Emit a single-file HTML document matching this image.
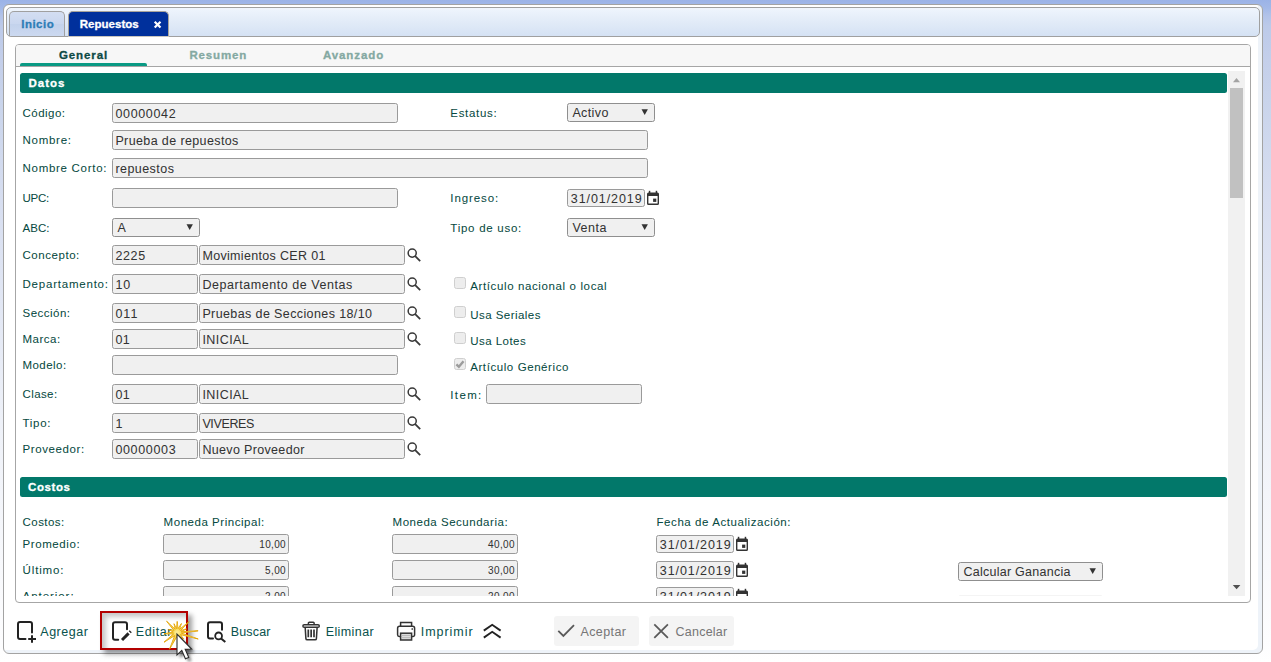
<!DOCTYPE html><html><head><meta charset="utf-8"><title>Repuestos</title><style>

html,body{margin:0;padding:0}
body{width:1271px;height:662px;overflow:hidden;position:relative;font-family:"Liberation Sans",sans-serif;
 background:linear-gradient(180deg,#9bb3e7 0px,#a3b9e8 8px,#b2c3e9 16px,#bccae9 26px,#c4cfea 60px,#c9d4eb 100px,#d7def0 200px,#eef1f8 420px,#fdfdfe 640px,#fff 662px)}
div,span,svg{position:absolute;box-sizing:border-box}
.frame{left:3px;top:4px;width:1260px;height:650px;border:1px solid #a3a3a3;border-radius:6px;background:#fff;box-shadow:inset -4px -3px 0 #eef3f9}
.nav{left:6px;top:7px;width:1254px;height:30px;border:1px solid #a0a0a0;border-radius:5px;background:linear-gradient(180deg,#eff5fd 0,#e3ecf8 45%,#d5e2f4 100%)}
.tab1{left:9px;top:11px;width:56px;height:25px;border:1px solid #a0a0a0;border-bottom:0;border-radius:5px 5px 0 0;background:linear-gradient(180deg,#d3def2 0,#cad7ef 48%,#c3d2ec 52%,#ccd9f0 100%)}
.tab2{left:68px;top:11px;width:101px;height:25px;border:1px solid #a8a49c;border-bottom:0;border-radius:5px 5px 0 0;background:#00309c}
.tab2l{left:68px;top:36px;width:101px;height:1px;background:#c8c5be}
.panel{left:15px;top:44px;width:1236px;height:559px;border:1px solid #a6a6a6;border-radius:4px;background:#fff}
.phead{left:16px;top:45px;width:1234px;height:21px;background:#f7f7f7;border-radius:3px 3px 0 0}
.pline{left:16px;top:66px;width:1234px;height:1px;background:#a6a6a6}
.uline{left:20px;top:63px;width:127px;height:3px;background:#0a9a84;border-radius:2px 2px 0 0}
.bar{left:20px;width:1207px;height:20px;background:#02786a;border-radius:2.5px}
.clip{left:0;top:0;width:1271px;height:596px;overflow:hidden}
.inp{border:1px solid #9a9a9a;border-radius:2.5px;background:#f0f0f0}
.sel{border-color:#8f8f8f}
.chk{border:1px solid #cfcfcf;border-radius:2.5px;background:#ededed}
.btn{background:#f4f4f4;border-radius:3px}
.track{left:1228px;top:71px;width:17px;height:525px;background:#f1f1f1}
.thumb{left:1230px;top:88px;width:13px;height:110px;background:#c1c1c1}
.red{left:100px;top:611px;width:88px;height:39px;border:2px solid #b30000;box-shadow:4px 4px 5px rgba(0,0,0,.38), inset 4px 4px 5px rgba(0,0,0,.22)}
.t{white-space:pre;line-height:16px;height:16px;-webkit-text-stroke:0.04px currentColor}
.b{-webkit-text-stroke:0.3px currentColor}

</style></head><body>
<div class="frame"></div><div class="nav"></div><div class="tab1"></div><div class="tab2"></div><div class="tab2l"></div>
<div class="panel"></div><div class="phead"></div><div class="pline"></div><div class="uline"></div>
<div class="clip">
<div class="bar" style="top:73px"></div><div class="bar" style="top:477px"></div>
<div class="track"></div><div class="thumb"></div>
<div class="inp" style="left:112px;top:103px;width:286px;height:20px;"></div>
<div class="inp" style="left:112px;top:130px;width:536px;height:20px;"></div>
<div class="inp" style="left:112px;top:158px;width:536px;height:20px;"></div>
<div class="inp" style="left:112px;top:188px;width:286px;height:20px;"></div>
<div class="inp sel" style="left:112px;top:218px;width:88px;height:19px;"></div>
<div class="inp" style="left:112px;top:245px;width:86px;height:20px;"></div>
<div class="inp" style="left:199px;top:245px;width:206px;height:20px;"></div>
<div class="inp" style="left:112px;top:274px;width:86px;height:20px;"></div>
<div class="inp" style="left:199px;top:274px;width:206px;height:20px;"></div>
<div class="inp" style="left:112px;top:303px;width:86px;height:20px;"></div>
<div class="inp" style="left:199px;top:303px;width:206px;height:20px;"></div>
<div class="inp" style="left:112px;top:329px;width:86px;height:20px;"></div>
<div class="inp" style="left:199px;top:329px;width:206px;height:20px;"></div>
<div class="inp" style="left:112px;top:355px;width:286px;height:20px;"></div>
<div class="inp" style="left:112px;top:384px;width:86px;height:20px;"></div>
<div class="inp" style="left:199px;top:384px;width:206px;height:20px;"></div>
<div class="inp" style="left:112px;top:413px;width:86px;height:20px;"></div>
<div class="inp" style="left:199px;top:413px;width:206px;height:20px;"></div>
<div class="inp" style="left:112px;top:439px;width:86px;height:20px;"></div>
<div class="inp" style="left:199px;top:439px;width:206px;height:20px;"></div>
<div class="inp sel" style="left:567px;top:103px;width:88px;height:19px;"></div>
<div class="inp" style="left:567px;top:189px;width:78px;height:18px;"></div>
<div class="inp sel" style="left:567px;top:218px;width:88px;height:19px;"></div>
<div class="chk" style="left:454px;top:277px;width:12px;height:12px;"></div>
<div class="chk" style="left:454px;top:306px;width:12px;height:12px;"></div>
<div class="chk" style="left:454px;top:332px;width:12px;height:12px;"></div>
<div class="chk" style="left:454px;top:358px;width:12px;height:12px;"></div>
<div class="inp" style="left:486px;top:384px;width:156px;height:20px;"></div>
<div class="inp" style="left:163px;top:534px;width:126px;height:20px;"></div>
<div class="inp" style="left:392px;top:534px;width:126px;height:20px;"></div>
<div class="inp" style="left:163px;top:560px;width:126px;height:20px;"></div>
<div class="inp" style="left:392px;top:560px;width:126px;height:20px;"></div>
<div class="inp" style="left:163px;top:586px;width:126px;height:20px;"></div>
<div class="inp" style="left:392px;top:586px;width:126px;height:20px;"></div>
<div class="inp" style="left:656px;top:535px;width:78px;height:18px;"></div>
<div class="inp" style="left:656px;top:561px;width:78px;height:18px;"></div>
<div class="inp" style="left:656px;top:587px;width:78px;height:18px;"></div>
<div class="inp sel" style="left:958px;top:562px;width:145px;height:19px;"></div>
<div class="btn" style="left:958px;top:595px;width:145px;height:21px;"></div>
<svg width="1271" height="662" style="left:0;top:0"><path d="M186.5 224.2h6.4l-3.2 5.8z" fill="#333"/><circle cx="412.2" cy="253.1" r="4.05" fill="none" stroke="#383838" stroke-width="1.5"/><path d="M415.2 256.1L420.2 261.2" stroke="#383838" stroke-width="1.7" fill="none"/><circle cx="412.2" cy="282.1" r="4.05" fill="none" stroke="#383838" stroke-width="1.5"/><path d="M415.2 285.1L420.2 290.20000000000005" stroke="#383838" stroke-width="1.7" fill="none"/><circle cx="412.2" cy="311.1" r="4.05" fill="none" stroke="#383838" stroke-width="1.5"/><path d="M415.2 314.1L420.2 319.20000000000005" stroke="#383838" stroke-width="1.7" fill="none"/><circle cx="412.2" cy="337.1" r="4.05" fill="none" stroke="#383838" stroke-width="1.5"/><path d="M415.2 340.1L420.2 345.20000000000005" stroke="#383838" stroke-width="1.7" fill="none"/><circle cx="412.2" cy="392.1" r="4.05" fill="none" stroke="#383838" stroke-width="1.5"/><path d="M415.2 395.1L420.2 400.20000000000005" stroke="#383838" stroke-width="1.7" fill="none"/><circle cx="412.2" cy="421.1" r="4.05" fill="none" stroke="#383838" stroke-width="1.5"/><path d="M415.2 424.1L420.2 429.20000000000005" stroke="#383838" stroke-width="1.7" fill="none"/><circle cx="412.2" cy="447.1" r="4.05" fill="none" stroke="#383838" stroke-width="1.5"/><path d="M415.2 450.1L420.2 455.20000000000005" stroke="#383838" stroke-width="1.7" fill="none"/><path d="M641.5 109.2h6.4l-3.2 5.8z" fill="#333"/><g fill="#333"><rect x="648.8" y="190.8" width="1.5" height="3"/><rect x="655.7" y="190.8" width="1.5" height="3"/><path fill-rule="evenodd" d="M648.5 192.60000000000002h9a1.5 1.5 0 0 1 1.5 1.5v9.4a1.5 1.5 0 0 1 -1.5 1.5h-9a1.5 1.5 0 0 1 -1.5 -1.5v-9.4a1.5 1.5 0 0 1 1.5 -1.5zM648.4 196.0v7.5h9.2v-7.5z"/><rect x="653.1" y="198.60000000000002" width="3.2" height="3.3"/></g><path d="M641.5 224.2h6.4l-3.2 5.8z" fill="#333"/><path d="M456.4 364.3l2.5 2.5l4.6 -5.6" stroke="#9c9c9c" stroke-width="2.4" fill="none"/><g fill="#333"><rect x="737.8" y="536.8" width="1.5" height="3"/><rect x="744.7" y="536.8" width="1.5" height="3"/><path fill-rule="evenodd" d="M737.5 538.5999999999999h9a1.5 1.5 0 0 1 1.5 1.5v9.4a1.5 1.5 0 0 1 -1.5 1.5h-9a1.5 1.5 0 0 1 -1.5 -1.5v-9.4a1.5 1.5 0 0 1 1.5 -1.5zM737.4 542.0v7.5h9.2v-7.5z"/><rect x="742.1" y="544.5999999999999" width="3.2" height="3.3"/></g><g fill="#333"><rect x="737.8" y="562.8" width="1.5" height="3"/><rect x="744.7" y="562.8" width="1.5" height="3"/><path fill-rule="evenodd" d="M737.5 564.5999999999999h9a1.5 1.5 0 0 1 1.5 1.5v9.4a1.5 1.5 0 0 1 -1.5 1.5h-9a1.5 1.5 0 0 1 -1.5 -1.5v-9.4a1.5 1.5 0 0 1 1.5 -1.5zM737.4 568.0v7.5h9.2v-7.5z"/><rect x="742.1" y="570.5999999999999" width="3.2" height="3.3"/></g><g fill="#333"><rect x="737.8" y="588.8" width="1.5" height="3"/><rect x="744.7" y="588.8" width="1.5" height="3"/><path fill-rule="evenodd" d="M737.5 590.5999999999999h9a1.5 1.5 0 0 1 1.5 1.5v9.4a1.5 1.5 0 0 1 -1.5 1.5h-9a1.5 1.5 0 0 1 -1.5 -1.5v-9.4a1.5 1.5 0 0 1 1.5 -1.5zM737.4 594.0v7.5h9.2v-7.5z"/><rect x="742.1" y="596.5999999999999" width="3.2" height="3.3"/></g><path d="M1089.5 568.2h6.4l-3.2 5.8z" fill="#333"/><path d="M154.7 21.7L160.5 27.5M160.5 21.7L154.7 27.5" stroke="#fff" stroke-width="2.2" fill="none"/><path d="M1233 82.2L1236.5 78L1240 82.2z" fill="#a3a3a3"/><path d="M1232.8 585L1236.6 589.2L1240.4 585z" fill="#505050"/></svg>
<span class="t b" id="t0" style="top:16.00px;font-size:11.5px;color:#2e7db7;font-weight:700;letter-spacing:0.494px;left:21.20px;">Inicio</span>
<span class="t b" id="t1" style="top:16.00px;font-size:11.5px;color:#ffffff;font-weight:700;letter-spacing:0.025px;left:79.70px;">Repuestos</span>
<span class="t b" id="t2" style="top:47.00px;font-size:11.5px;color:#0d4a45;font-weight:700;letter-spacing:0.912px;left:58.90px;">General</span>
<span class="t b" id="t3" style="top:47.00px;font-size:11.5px;color:#84a9a2;font-weight:700;letter-spacing:0.870px;left:189.40px;">Resumen</span>
<span class="t b" id="t4" style="top:47.00px;font-size:11.5px;color:#84a9a2;font-weight:700;letter-spacing:0.930px;left:322.90px;">Avanzado</span>
<span class="t b" id="t5" style="top:75.00px;font-size:11.5px;color:#fff;font-weight:700;letter-spacing:1.012px;left:28.50px;">Datos</span>
<span class="t b" id="t6" style="top:479.00px;font-size:11.5px;color:#fff;font-weight:700;letter-spacing:0.563px;left:28.10px;">Costos</span>
<span class="t" id="t7" style="top:105.00px;font-size:11.5px;color:#074a42;letter-spacing:0.477px;left:22.50px;">Código:</span>
<span class="t" id="t8" style="top:132.00px;font-size:11.5px;color:#074a42;letter-spacing:0.732px;left:22.50px;">Nombre:</span>
<span class="t" id="t9" style="top:160.00px;font-size:11.5px;color:#074a42;letter-spacing:0.715px;left:22.50px;">Nombre Corto:</span>
<span class="t" id="t10" style="top:190.00px;font-size:11.5px;color:#074a42;letter-spacing:-0.261px;left:22.50px;">UPC:</span>
<span class="t" id="t11" style="top:220.00px;font-size:11.5px;color:#074a42;letter-spacing:0.052px;left:22.50px;">ABC:</span>
<span class="t" id="t12" style="top:247.00px;font-size:11.5px;color:#074a42;letter-spacing:0.545px;left:22.50px;">Concepto:</span>
<span class="t" id="t13" style="top:276.00px;font-size:11.5px;color:#074a42;letter-spacing:0.785px;left:22.50px;">Departamento:</span>
<span class="t" id="t14" style="top:305.00px;font-size:11.5px;color:#074a42;letter-spacing:0.484px;left:22.50px;">Sección:</span>
<span class="t" id="t15" style="top:331.00px;font-size:11.5px;color:#074a42;letter-spacing:0.509px;left:22.50px;">Marca:</span>
<span class="t" id="t16" style="top:357.00px;font-size:11.5px;color:#074a42;letter-spacing:0.446px;left:22.50px;">Modelo:</span>
<span class="t" id="t17" style="top:386.00px;font-size:11.5px;color:#074a42;letter-spacing:0.398px;left:22.50px;">Clase:</span>
<span class="t" id="t18" style="top:415.00px;font-size:11.5px;color:#074a42;letter-spacing:0.715px;left:22.50px;">Tipo:</span>
<span class="t" id="t19" style="top:441.00px;font-size:11.5px;color:#074a42;letter-spacing:0.593px;left:22.50px;">Proveedor:</span>
<span class="t" id="t20" style="top:105.60px;font-size:12.5px;color:#333333;letter-spacing:0.668px;left:115.40px;">00000042</span>
<span class="t" id="t21" style="top:132.60px;font-size:12.5px;color:#333333;letter-spacing:0.385px;left:115.40px;">Prueba de repuestos</span>
<span class="t" id="t22" style="top:160.60px;font-size:12.5px;color:#333333;letter-spacing:0.449px;left:115.40px;">repuestos</span>
<span class="t" id="t23" style="top:219.60px;font-size:12.5px;color:#333333;left:117.40px;">A</span>
<span class="t" id="t24" style="top:247.60px;font-size:12.5px;color:#333333;letter-spacing:0.629px;left:115.40px;">2225</span>
<span class="t" id="t25" style="top:247.60px;font-size:12.5px;color:#333333;letter-spacing:0.329px;left:202.40px;">Movimientos CER 01</span>
<span class="t" id="t26" style="top:276.60px;font-size:12.5px;color:#333333;letter-spacing:0.894px;left:115.40px;">10</span>
<span class="t" id="t27" style="top:276.60px;font-size:12.5px;color:#333333;letter-spacing:0.557px;left:202.40px;">Departamento de Ventas</span>
<span class="t" id="t28" style="top:305.60px;font-size:12.5px;color:#333333;letter-spacing:1.031px;left:115.40px;">011</span>
<span class="t" id="t29" style="top:305.60px;font-size:12.5px;color:#333333;letter-spacing:0.390px;left:202.40px;">Pruebas de Secciones 18/10</span>
<span class="t" id="t30" style="top:331.60px;font-size:12.5px;color:#333333;letter-spacing:0.494px;left:115.40px;">01</span>
<span class="t" id="t31" style="top:331.60px;font-size:12.5px;color:#333333;letter-spacing:0.439px;left:202.40px;">INICIAL</span>
<span class="t" id="t32" style="top:386.60px;font-size:12.5px;color:#333333;letter-spacing:0.494px;left:115.40px;">01</span>
<span class="t" id="t33" style="top:386.60px;font-size:12.5px;color:#333333;letter-spacing:0.439px;left:202.40px;">INICIAL</span>
<span class="t" id="t34" style="top:415.60px;font-size:12.5px;color:#333333;left:115.40px;">1</span>
<span class="t" id="t35" style="top:415.60px;font-size:12.5px;color:#333333;letter-spacing:-0.365px;left:202.40px;">VIVERES</span>
<span class="t" id="t36" style="top:441.60px;font-size:12.5px;color:#333333;letter-spacing:0.654px;left:115.40px;">00000003</span>
<span class="t" id="t37" style="top:441.60px;font-size:12.5px;color:#333333;letter-spacing:0.337px;left:202.40px;">Nuevo Proveedor</span>
<span class="t" id="t38" style="top:105.00px;font-size:11.5px;color:#074a42;letter-spacing:0.677px;left:450.30px;">Estatus:</span>
<span class="t" id="t39" style="top:104.60px;font-size:12.5px;color:#333333;letter-spacing:0.391px;left:572.40px;">Activo</span>
<span class="t" id="t40" style="top:190.00px;font-size:11.5px;color:#074a42;letter-spacing:0.920px;left:450.30px;">Ingreso:</span>
<span class="t" id="t41" style="top:190.60px;font-size:12.5px;color:#333333;letter-spacing:0.915px;left:570.80px;">31/01/2019</span>
<span class="t" id="t42" style="top:220.00px;font-size:11.5px;color:#074a42;letter-spacing:0.739px;left:450.30px;">Tipo de uso:</span>
<span class="t" id="t43" style="top:219.60px;font-size:12.5px;color:#333333;letter-spacing:0.504px;left:572.40px;">Venta</span>
<span class="t" id="t44" style="top:278.00px;font-size:11.5px;color:#074a42;letter-spacing:0.622px;left:470.20px;">Artículo nacional o local</span>
<span class="t" id="t45" style="top:307.00px;font-size:11.5px;color:#074a42;letter-spacing:0.463px;left:470.20px;">Usa Seriales</span>
<span class="t" id="t46" style="top:333.00px;font-size:11.5px;color:#074a42;letter-spacing:0.465px;left:470.20px;">Usa Lotes</span>
<span class="t" id="t47" style="top:359.00px;font-size:11.5px;color:#074a42;letter-spacing:0.584px;left:470.20px;">Artículo Genérico</span>
<span class="t" id="t48" style="top:387.00px;font-size:11.5px;color:#074a42;letter-spacing:1.359px;left:450.30px;">Item:</span>
<span class="t" id="t49" style="top:514.00px;font-size:11.5px;color:#074a42;letter-spacing:0.417px;left:22.60px;">Costos:</span>
<span class="t" id="t50" style="top:514.00px;font-size:11.5px;color:#074a42;letter-spacing:0.534px;left:163.60px;">Moneda Principal:</span>
<span class="t" id="t51" style="top:514.00px;font-size:11.5px;color:#074a42;letter-spacing:0.521px;left:392.60px;">Moneda Secundaria:</span>
<span class="t" id="t52" style="top:514.00px;font-size:11.5px;color:#074a42;letter-spacing:0.570px;left:656.50px;">Fecha de Actualización:</span>
<span class="t" id="t53" style="top:536.00px;font-size:11.5px;color:#074a42;letter-spacing:0.572px;left:22.60px;">Promedio:</span>
<span class="t" id="t54" style="top:562.00px;font-size:11.5px;color:#074a42;letter-spacing:0.836px;left:22.60px;">Último:</span>
<span class="t" id="t55" style="top:588.00px;font-size:11.5px;color:#074a42;letter-spacing:0.941px;left:22.60px;">Anterior:</span>
<span class="t" id="t56" style="top:536.50px;font-size:10px;color:#333333;letter-spacing:0.317px;right:985.08px;">10,00</span>
<span class="t" id="t57" style="top:536.50px;font-size:10px;color:#333333;letter-spacing:0.392px;right:756.01px;">40,00</span>
<span class="t" id="t58" style="top:562.50px;font-size:10px;color:#333333;letter-spacing:0.344px;right:985.06px;">5,00</span>
<span class="t" id="t59" style="top:562.50px;font-size:10px;color:#333333;letter-spacing:0.392px;right:756.01px;">30,00</span>
<span class="t" id="t60" style="top:588.50px;font-size:10px;color:#333333;letter-spacing:0.344px;right:985.06px;">2,00</span>
<span class="t" id="t61" style="top:588.50px;font-size:10px;color:#333333;letter-spacing:0.392px;right:756.01px;">20,00</span>
<span class="t" id="t62" style="top:536.60px;font-size:12.5px;color:#333333;letter-spacing:0.915px;left:659.80px;">31/01/2019</span>
<span class="t" id="t63" style="top:562.60px;font-size:12.5px;color:#333333;letter-spacing:0.915px;left:659.80px;">31/01/2019</span>
<span class="t" id="t64" style="top:588.60px;font-size:12.5px;color:#333333;letter-spacing:0.915px;left:659.80px;">31/01/2019</span>
<span class="t" id="t65" style="top:563.60px;font-size:12.5px;color:#333333;letter-spacing:0.260px;left:963.40px;">Calcular Ganancia</span>
</div>
<div class="btn" style="left:554px;top:616px;width:85px;height:30px"></div><div class="btn" style="left:649px;top:616px;width:85px;height:30px"></div>
<span class="t" id="t66" style="top:623.60px;font-size:12.5px;color:#0a534e;letter-spacing:0.519px;left:40.30px;">Agregar</span>
<span class="t" id="t67" style="top:623.60px;font-size:12.5px;color:#0a534e;letter-spacing:0.589px;left:135.80px;">Editar</span>
<span class="t" id="t68" style="top:623.60px;font-size:12.5px;color:#0a534e;letter-spacing:0.179px;left:230.70px;">Buscar</span>
<span class="t" id="t69" style="top:623.60px;font-size:12.5px;color:#0a534e;letter-spacing:0.406px;left:325.70px;">Eliminar</span>
<span class="t" id="t70" style="top:623.60px;font-size:12.5px;color:#0a534e;letter-spacing:0.980px;left:420.70px;">Imprimir</span>
<span class="t" id="t71" style="top:623.60px;font-size:12.5px;color:#777;letter-spacing:0.418px;left:580.40px;">Aceptar</span>
<span class="t" id="t72" style="top:623.60px;font-size:12.5px;color:#777;letter-spacing:0.224px;left:675.60px;">Cancelar</span>
<div class="red"></div>
<svg width="1271" height="662" style="left:0;top:0"><path d="M32 632.5V624a2 2 0 0 0 -2 -2H20a2 2 0 0 0 -2 2V637a2 2 0 0 0 2 2H25.5" fill="none" stroke="#222" stroke-width="2" stroke-linecap="round"/><path d="M28.2 639H36M32 635.2V642.8" stroke="#222" stroke-width="2" fill="none"/><path d="M127 629.3V624.2a2 2 0 0 0 -2 -2H115a2 2 0 0 0 -2 2V637.7a2 2 0 0 0 2 2H118.2" fill="none" stroke="#222" stroke-width="2" stroke-linecap="round"/><path d="M128.6 633.4L122 640" stroke="#222" stroke-width="3" fill="none"/><path d="M130.7 631.3L129.8 632.2" stroke="#222" stroke-width="3" fill="none"/><path d="M222 629.8V624.2a2 2 0 0 0 -2 -2H210a2 2 0 0 0 -2 2V636.6a2 2 0 0 0 2 2H213" fill="none" stroke="#222" stroke-width="2" stroke-linecap="round"/><circle cx="218.6" cy="635.9" r="3.4" fill="#fff" stroke="#222" stroke-width="1.8"/><path d="M221.1 638.4L225.3 642.1" stroke="#222" stroke-width="2" fill="none"/><g fill="none" stroke="#333" stroke-width="1.5"><rect x="302.9" y="624.7" width="16.4" height="2.6" rx="1.3"/><path d="M308.4 624.5v-1.4a0.9 0.9 0 0 1 0.9 -0.9h3.9a0.9 0.9 0 0 1 0.9 0.9v1.4"/><path d="M305.2 627.6l0.7 11a1.3 1.3 0 0 0 1.3 1.2h7.9a1.3 1.3 0 0 0 1.3 -1.2l0.7 -11"/><path d="M308.3 629.6v7.6M311.15 629.6v7.6M314 629.6v7.6" stroke-width="1.7"/></g><g fill="none" stroke="#333" stroke-width="1.5"><path d="M400.6 626.3v-3.8h11v3.8"/><path d="M400.4 636.4h-1.2a1.6 1.6 0 0 1 -1.6 -1.6v-6.6a2 2 0 0 1 2 -2h13a2 2 0 0 1 2 2v6.6a1.6 1.6 0 0 1 -1.6 1.6h-1.2"/><rect x="400.6" y="633.2" width="11" height="6.8" fill="#ddd"/><path d="M401.5 635.5h9.2M401.5 637.6h9.2" stroke="#bbb" stroke-width="1"/><circle cx="412.2" cy="629" r="0.5" fill="#333" stroke-width="0.8"/></g><path d="M483.8 630.6L492.2 624.8L500.6 630.6M483.8 637.6L492.2 631.8L500.6 637.6" fill="none" stroke="#222" stroke-width="1.9"/><path d="M558.3 630.8L563.4 636L574 625.2" fill="none" stroke="#5a5a5a" stroke-width="1.8"/><path d="M654.3 624.4L667.9 637.8M667.9 624.4L654.3 637.8" fill="none" stroke="#5a5a5a" stroke-width="1.8"/><defs><radialGradient id="sg" gradientUnits="userSpaceOnUse" cx="177.2" cy="632.6" r="20"><stop offset="0" stop-color="#fff6b0"/><stop offset="0.2" stop-color="#f6d648"/><stop offset="0.5" stop-color="#efbf2c"/><stop offset="1" stop-color="#e9ad12"/></radialGradient><filter id="cs" x="-50%" y="-50%" width="220%" height="220%"><feGaussianBlur stdDeviation="1.6"/></filter></defs><polygon points="198.1,630.8 181.1,633.0 198.2,639.0 180.5,634.6 183.6,639.0 179.1,636.0 179.5,641.3 176.9,636.5 169.5,649.2 174.7,635.6 164.0,642.2 173.5,634.0 164.1,633.8 173.3,632.1 168.7,629.5 173.9,630.4 166.6,621.2 175.2,629.3 174.0,623.7 176.5,628.8 177.2,621.4 178.0,628.8 181.4,623.5 179.5,629.4 188.9,621.7 180.5,630.5 186.5,628.9 181.0,631.7" fill="url(#sg)" stroke="#e3a200" stroke-width="0.9" stroke-linejoin="round"/><path d="M177.2 632.6L194.4 631.1M177.2 632.6L194.5 637.9M177.2 632.6L182.4 637.8M177.2 632.6L179.1 639.7M177.2 632.6L170.9 646.2M177.2 632.6L166.4 640.5M177.2 632.6L166.4 633.5M177.2 632.6L170.3 630.1M177.2 632.6L168.5 623.2M177.2 632.6L174.5 625.3M177.2 632.6L177.2 623.4M177.2 632.6L180.7 625.2M177.2 632.6L186.8 623.7M177.2 632.6L184.8 629.5" stroke="#fbe88c" stroke-width="0.5" fill="none" opacity="0.6"/><polygon points="180.0,637.5 180.0,658.2 184.8,653.7 188.4,662.1 191.7,660.7 188.2,652.5 194.6,652.3" fill="#000" opacity="0.45" filter="url(#cs)"/><polygon points="177.0,634.2 177.0,654.9 181.8,650.4 185.4,658.8 188.7,657.4 185.2,649.2 191.6,649.0" fill="#fff" stroke="#2a2a2a" stroke-width="1.1" stroke-linejoin="miter"/></svg>
</body></html>
